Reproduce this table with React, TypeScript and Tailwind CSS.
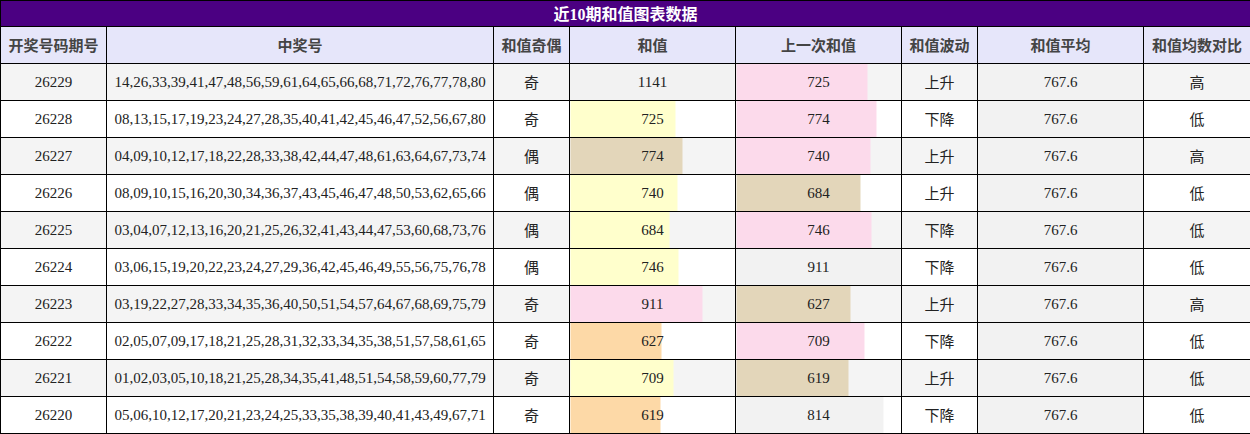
import React from 'react';

type Row = {
  issue: string;
  nums: string;
  parity: string;
  sum: number;
  sumColor: string;
  prev: number;
  prevColor: string;
  trend: string;
  compare: string;
};

const COLORS: Record<string, string> = {
  g: '#f2f2f2',
  y: '#ffffcc',
  t: '#e3d6ba',
  p: '#fcdaeb',
  o: '#fdd9a7',
};

const rows: Row[] = [
  { issue: '26229', nums: '14,26,33,39,41,47,48,56,59,61,64,65,66,68,71,72,76,77,78,80', parity: '奇', sum: 1141, sumColor: 'g', prev: 725, prevColor: 'p', trend: '上升', compare: '高' },
  { issue: '26228', nums: '08,13,15,17,19,23,24,27,28,35,40,41,42,45,46,47,52,56,67,80', parity: '奇', sum: 725, sumColor: 'y', prev: 774, prevColor: 'p', trend: '下降', compare: '低' },
  { issue: '26227', nums: '04,09,10,12,17,18,22,28,33,38,42,44,47,48,61,63,64,67,73,74', parity: '偶', sum: 774, sumColor: 't', prev: 740, prevColor: 'p', trend: '上升', compare: '高' },
  { issue: '26226', nums: '08,09,10,15,16,20,30,34,36,37,43,45,46,47,48,50,53,62,65,66', parity: '偶', sum: 740, sumColor: 'y', prev: 684, prevColor: 't', trend: '上升', compare: '低' },
  { issue: '26225', nums: '03,04,07,12,13,16,20,21,25,26,32,41,43,44,47,53,60,68,73,76', parity: '偶', sum: 684, sumColor: 'y', prev: 746, prevColor: 'p', trend: '下降', compare: '低' },
  { issue: '26224', nums: '03,06,15,19,20,22,23,24,27,29,36,42,45,46,49,55,56,75,76,78', parity: '偶', sum: 746, sumColor: 'y', prev: 911, prevColor: 'g', trend: '下降', compare: '低' },
  { issue: '26223', nums: '03,19,22,27,28,33,34,35,36,40,50,51,54,57,64,67,68,69,75,79', parity: '奇', sum: 911, sumColor: 'p', prev: 627, prevColor: 't', trend: '上升', compare: '高' },
  { issue: '26222', nums: '02,05,07,09,17,18,21,25,28,31,32,33,34,35,38,51,57,58,61,65', parity: '奇', sum: 627, sumColor: 'o', prev: 709, prevColor: 'p', trend: '下降', compare: '低' },
  { issue: '26221', nums: '01,02,03,05,10,18,21,25,28,34,35,41,48,51,54,58,59,60,77,79', parity: '奇', sum: 709, sumColor: 'y', prev: 619, prevColor: 't', trend: '上升', compare: '低' },
  { issue: '26220', nums: '05,06,10,12,17,20,21,23,24,25,33,35,38,39,40,41,43,49,67,71', parity: '奇', sum: 619, sumColor: 'o', prev: 814, prevColor: 'g', trend: '下降', compare: '低' },
];

const AVG = 767.6;
const maxSum = Math.max(...rows.map((r) => r.sum));
const maxPrev = Math.max(...rows.map((r) => r.prev));

// bar drawn as a background gradient, width relative to the column max
const bar = (value: number, max: number, color: string) => {
  const pct = (value / max) * 100;
  return { background: `linear-gradient(to right, ${color} ${pct}%, transparent ${pct}%)` };
};

const headers = ['开奖号码期号', '中奖号', '和值奇偶', '和值', '上一次和值', '和值波动', '和值平均', '和值均数对比'];

const num = 'border border-black p-0 text-[15px] text-[#222]';
const cjk = 'border border-black p-0 pt-[3px] text-[15px] text-[#222]';

export default function App() {
  return (
    <div className="w-[1250px] bg-white font-['Liberation_Serif','Noto_Sans_CJK_SC',serif]">
      <table className="w-[1250px] table-fixed border-collapse text-center">
        <colgroup>
          <col className="w-[106px]" />
          <col className="w-[387px]" />
          <col className="w-[76px]" />
          <col className="w-[166px]" />
          <col className="w-[166px]" />
          <col className="w-[76px]" />
          <col className="w-[166px]" />
          <col className="w-[107px]" />
        </colgroup>
        <thead>
          <tr className="h-[26px]">
            <th colSpan={8} className="border border-black bg-[#4b0082] p-0 pt-[2px] text-[16px] font-bold leading-none text-white">
              近10期和值图表数据
            </th>
          </tr>
          <tr className="h-[37px]">
            {headers.map((h) => (
              <th key={h} className="border border-black bg-[#e6e6fa] p-0 pt-[3px] text-[15px] font-bold text-[#444]">
                {h}
              </th>
            ))}
          </tr>
        </thead>
        <tbody>
          {rows.map((r, i) => (
            <tr key={r.issue} className={i % 2 === 0 ? 'h-[37px] bg-[#f4f4f4]' : 'h-[37px] bg-white'}>
              <td className={num}>{r.issue}</td>
              <td className={num}>{r.nums}</td>
              <td className={cjk}>{r.parity}</td>
              <td className={num} style={bar(r.sum, maxSum, COLORS[r.sumColor])}>
                {r.sum}
              </td>
              <td className={num} style={bar(r.prev, maxPrev, COLORS[r.prevColor])}>
                {r.prev}
              </td>
              <td className={cjk}>{r.trend}</td>
              <td className={`${num} bg-[#f2f2f2]`}>{AVG}</td>
              <td className={cjk}>{r.compare}</td>
            </tr>
          ))}
        </tbody>
      </table>
    </div>
  );
}
